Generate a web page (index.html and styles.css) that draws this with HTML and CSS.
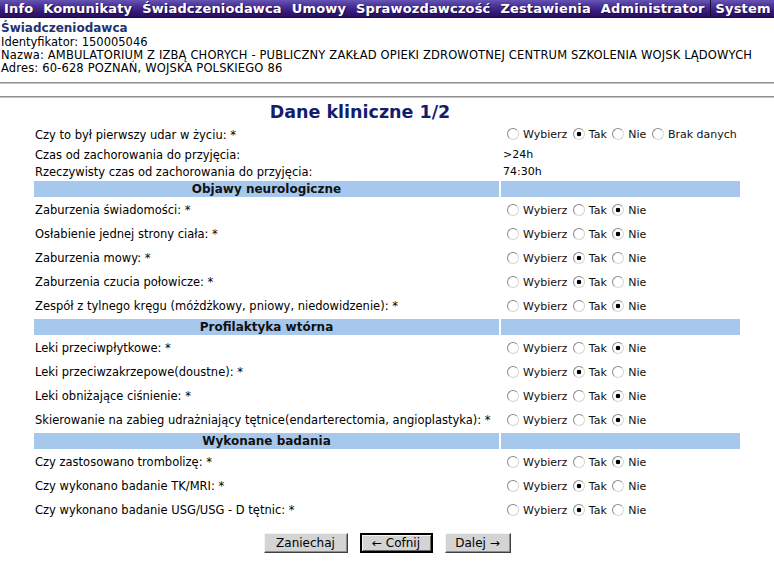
FILE: index.html
```html
<!DOCTYPE html>
<html lang="pl">
<head>
<meta charset="utf-8">
<title>Dane kliniczne 1/2</title>
<link rel="stylesheet" href="styles.css">
</head>
<body>
<nav class="menu">
  <span class="menu-item">Info</span>
  <span class="menu-item">Komunikaty</span>
  <span class="menu-item">Świadczeniodawca</span>
  <span class="menu-item">Umowy</span>
  <span class="menu-item">Sprawozdawczość</span>
  <span class="menu-item">Zestawienia</span>
  <span class="menu-item">Administrator</span>
  <span class="menu-item menu-sep">System</span>
</nav>
<div class="provider">
  <div class="provider-title">Świadczeniodawca</div>
  <div class="provider-line">Identyfikator: 150005046</div>
  <div class="provider-line caps">Nazwa: AMBULATORIUM Z IZBĄ CHORYCH - PUBLICZNY ZAKŁAD OPIEKI ZDROWOTNEJ CENTRUM SZKOLENIA WOJSK LĄDOWYCH</div>
  <div class="provider-line caps">Adres: 60-628 POZNAŃ, WOJSKA POLSKIEGO 86</div>
</div>
<div class="rule rule-first"></div>
<div class="rule-gap"></div>
<div class="rule"></div>
<h1 class="page-title">Dane kliniczne 1/2</h1>
<table class="form">
  <colgroup><col class="col-label"><col class="col-value"></colgroup>
  <tr class="row-first">
    <td>Czy to był pierwszy udar w życiu: *</td>
    <td><input type="radio" class="first" name="q1"><label>Wybierz</label> <input type="radio" name="q1" checked><label>Tak</label> <input type="radio" name="q1"><label>Nie</label> <input type="radio" name="q1"><label>Brak danych</label></td>
  </tr>
  <tr class="row-info">
    <td>Czas od zachorowania do przyjęcia:</td>
    <td>&gt;24h</td>
  </tr>
  <tr class="row-info">
    <td>Rzeczywisty czas od zachorowania do przyjęcia:</td>
    <td>74:30h</td>
  </tr>
  <tr class="row-section">
    <td>Objawy neurologiczne</td>
    <td></td>
  </tr>
  <tr class="row-q">
    <td>Zaburzenia świadomości: *</td>
    <td><input type="radio" class="first" name="q2"><label>Wybierz</label> <input type="radio" name="q2"><label>Tak</label> <input type="radio" name="q2" checked><label>Nie</label></td>
  </tr>
  <tr class="row-q">
    <td>Osłabienie jednej strony ciała: *</td>
    <td><input type="radio" class="first" name="q3"><label>Wybierz</label> <input type="radio" name="q3"><label>Tak</label> <input type="radio" name="q3" checked><label>Nie</label></td>
  </tr>
  <tr class="row-q">
    <td>Zaburzenia mowy: *</td>
    <td><input type="radio" class="first" name="q4"><label>Wybierz</label> <input type="radio" name="q4" checked><label>Tak</label> <input type="radio" name="q4"><label>Nie</label></td>
  </tr>
  <tr class="row-q">
    <td>Zaburzenia czucia połowicze: *</td>
    <td><input type="radio" class="first" name="q5"><label>Wybierz</label> <input type="radio" name="q5" checked><label>Tak</label> <input type="radio" name="q5"><label>Nie</label></td>
  </tr>
  <tr class="row-q">
    <td>Zespół z tylnego kręgu (móżdżkowy, pniowy, niedowidzenie): *</td>
    <td><input type="radio" class="first" name="q6"><label>Wybierz</label> <input type="radio" name="q6"><label>Tak</label> <input type="radio" name="q6" checked><label>Nie</label></td>
  </tr>
  <tr class="row-section">
    <td>Profilaktyka wtórna</td>
    <td></td>
  </tr>
  <tr class="row-q">
    <td>Leki przeciwpłytkowe: *</td>
    <td><input type="radio" class="first" name="q7"><label>Wybierz</label> <input type="radio" name="q7"><label>Tak</label> <input type="radio" name="q7" checked><label>Nie</label></td>
  </tr>
  <tr class="row-q">
    <td>Leki przeciwzakrzepowe(doustne): *</td>
    <td><input type="radio" class="first" name="q8"><label>Wybierz</label> <input type="radio" name="q8" checked><label>Tak</label> <input type="radio" name="q8"><label>Nie</label></td>
  </tr>
  <tr class="row-q">
    <td>Leki obniżające ciśnienie: *</td>
    <td><input type="radio" class="first" name="q9"><label>Wybierz</label> <input type="radio" name="q9"><label>Tak</label> <input type="radio" name="q9" checked><label>Nie</label></td>
  </tr>
  <tr class="row-q">
    <td>Skierowanie na zabieg udrażniający tętnice(endarterectomia, angioplastyka): *</td>
    <td><input type="radio" class="first" name="q10"><label>Wybierz</label> <input type="radio" name="q10"><label>Tak</label> <input type="radio" name="q10" checked><label>Nie</label></td>
  </tr>
  <tr class="row-section">
    <td>Wykonane badania</td>
    <td></td>
  </tr>
  <tr class="row-q">
    <td>Czy zastosowano trombolizę: *</td>
    <td><input type="radio" class="first" name="q11"><label>Wybierz</label> <input type="radio" name="q11"><label>Tak</label> <input type="radio" name="q11" checked><label>Nie</label></td>
  </tr>
  <tr class="row-q">
    <td>Czy wykonano badanie TK/MRI: *</td>
    <td><input type="radio" class="first" name="q12"><label>Wybierz</label> <input type="radio" name="q12" checked><label>Tak</label> <input type="radio" name="q12"><label>Nie</label></td>
  </tr>
  <tr class="row-q">
    <td>Czy wykonano badanie USG/USG - D tętnic: *</td>
    <td><input type="radio" class="first" name="q13"><label>Wybierz</label> <input type="radio" name="q13" checked><label>Tak</label> <input type="radio" name="q13"><label>Nie</label></td>
  </tr>
</table>
<div class="actions">
  <button type="button" class="btn btn-cancel">Zaniechaj</button>
  <button type="button" class="btn btn-back btn-default">← Cofnij</button>
  <button type="button" class="btn btn-next">Dalej →</button>
</div>
</body>
</html>
```

FILE: styles.css
```css
html, body {
  margin: 0;
  padding: 0;
  background: #fff;
}

body {
  font-family: "DejaVu Sans", Verdana, sans-serif;
  font-size: 11px;
  color: #000;
}

/* top menu */
.menu {
  display: flex;
  height: 18px;
  background: linear-gradient(to bottom, #6655b4 0%, #4a3296 35%, #35197a 70%, #28105e 100%);
  border-bottom: 1px solid #1d0a45;
  box-sizing: border-box;
}

.menu-item {
  padding: 0 5px;
  font-size: 13px;
  font-weight: bold;
  line-height: 17px;
  letter-spacing: 0.15px;
  color: #fff;
  text-shadow: 1px 1px 0 #1c0b40;
  white-space: nowrap;
}

.menu-item:first-child {
  padding-left: 4px;
}

.menu-sep {
  border-left: 1px solid #170838;
  padding-left: 5px;
}

/* provider info */
.provider {
  padding: 3px 1px 0;
}

.provider-title {
  font-size: 12px;
  font-weight: bold;
  line-height: 15px;
  color: #1f3470;
}

.provider-line {
  font-size: 11.5px;
  line-height: 13px;
}

.provider-line.caps {
  letter-spacing: 0.16px;
}

.rule {
  border-top: 1px solid #8e8e8e;
  border-bottom: 1px solid #c4c4c4;
}

.rule-first {
  margin-top: 7px;
}

.rule-gap {
  height: 12px;
}

/* title */
.page-title {
  margin: 4px 54px 0 0;
  font-size: 17.5px;
  line-height: 20px;
  font-weight: bold;
  text-align: center;
  color: #141c6e;
}

/* form table */
.form {
  width: 710px;
  margin: 0 auto;
  table-layout: fixed;
  border-collapse: separate;
  border-spacing: 2px;
}

.col-label {
  width: 465px;
}

.col-value {
  width: 239px;
}

.form td {
  padding: 0 1px;
  vertical-align: middle;
  white-space: nowrap;
  font-size: 11.5px;
}

.row-first td {
  height: 21px;
}

.row-info td {
  height: 15px;
}

.row-q td {
  height: 22px;
}

.row-section td {
  height: 16px;
  padding: 0;
  background: #a6c8ed;
  font-size: 12px;
  font-weight: bold;
  text-align: center;
  color: #111;
}

.form td + td {
  padding-left: 2px;
  font-size: 11px;
}

.form input[type="radio"] {
  -webkit-appearance: none;
  appearance: none;
  width: 12px;
  height: 12px;
  margin: 0 4px 0 2px;
  vertical-align: -2px;
  border-radius: 50%;
  border: 1px solid;
  border-color: #8a8a8a #d6d6d6 #d6d6d6 #8a8a8a;
  background: #fff;
  box-sizing: border-box;
}

.form input[type="radio"].first {
  margin-left: 4px;
}

.form input[type="radio"]:checked {
  background: radial-gradient(circle, #000 0 2px, #fff 2.6px);
}

.form label {
  color: #111;
}

/* buttons */
.actions {
  display: flex;
  justify-content: center;
  gap: 12px;
  margin-top: 10px;
}

.btn {
  height: 20px;
  padding: 0;
  font-family: "DejaVu Sans", Verdana, sans-serif;
  font-size: 12px;
  color: #000;
  background: #d4d4d4;
  border: 1px solid;
  border-color: #f4f4f4 #404040 #404040 #f4f4f4;
  box-shadow: inset -1px -1px 0 #8c8c8c;
  text-align: center;
  box-sizing: border-box;
}

.btn-default {
  border: 2px solid #000;
  box-shadow: inset 1px 1px 0 #f4f4f4, inset -1px -1px 0 #6a6a6a;
}

.btn-cancel {
  width: 84px;
}

.btn-back {
  width: 73px;
}

.btn-next {
  width: 66px;
}
```
